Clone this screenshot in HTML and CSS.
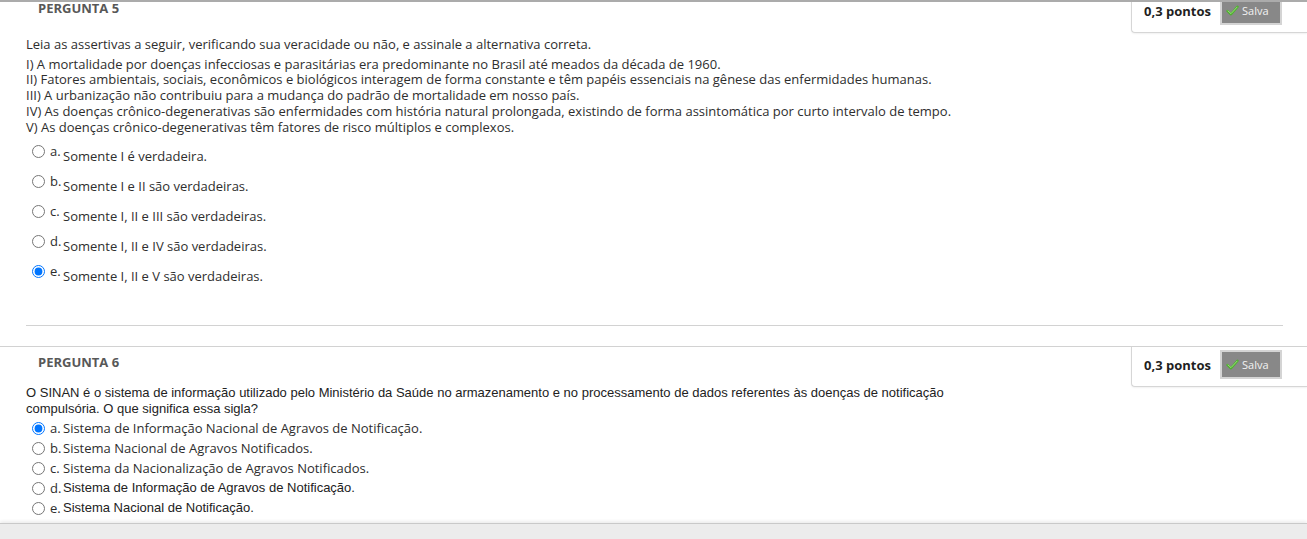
FILE: index.html
```html
<!DOCTYPE html>
<html lang="pt-BR">
<head>
<meta charset="utf-8">
<title>Questionário</title>
<link rel="stylesheet" href="styles.css">
</head>
<body>
<div class="top-line"></div>
<main class="page">
  <section class="question question--first">
    <div class="q-head">
      <div class="score">
        <span class="pts">0,3 pontos</span>
        <span class="saved"><svg class="check" width="13" height="11" viewBox="0 0 13 11"><path d="M1.5 6 L5 9.3 L11.5 1.8" fill="none" stroke="#4fb02f" stroke-width="2.4" stroke-linecap="round" stroke-linejoin="round"/><path d="M2 6 L5 8.6 L11 2.2" fill="none" stroke="#a8e68e" stroke-width="0.8" stroke-linecap="round"/></svg>Salva</span>
      </div>
      <h3 class="q-title">PERGUNTA 5</h3>
    </div>
    <div class="q-body">
      <p class="q-intro">Leia as assertivas a seguir, verificando sua veracidade ou não, e assinale a alternativa correta.</p>
      <div class="assertions">
        <div>I) A mortalidade por doenças infecciosas e parasitárias era predominante no Brasil até meados da década de 1960.</div>
        <div>II) Fatores ambientais, sociais, econômicos e biológicos interagem de forma constante e têm papéis essenciais na gênese das enfermidades humanas.</div>
        <div>III) A urbanização não contribuiu para a mudança do padrão de mortalidade em nosso país.</div>
        <div>IV) As doenças crônico-degenerativas são enfermidades com história natural prolongada, existindo de forma assintomática por curto intervalo de tempo.</div>
        <div>V) As doenças crônico-degenerativas têm fatores de risco múltiplos e complexos.</div>
      </div>
      <div class="options options--tall">
        <label class="opt"><input type="radio" name="q5"><span class="opt-letter">a.</span><span class="opt-text">Somente I é verdadeira.</span></label>
        <label class="opt"><input type="radio" name="q5"><span class="opt-letter">b.</span><span class="opt-text">Somente I e II são verdadeiras.</span></label>
        <label class="opt"><input type="radio" name="q5"><span class="opt-letter">c.</span><span class="opt-text">Somente I, II e III são verdadeiras.</span></label>
        <label class="opt"><input type="radio" name="q5"><span class="opt-letter">d.</span><span class="opt-text">Somente I, II e IV são verdadeiras.</span></label>
        <label class="opt"><input type="radio" name="q5" checked><span class="opt-letter">e.</span><span class="opt-text">Somente I, II e V são verdadeiras.</span></label>
      </div>
      <hr class="q-sep">
    </div>
  </section>

  <section class="question">
    <div class="q-head">
      <div class="score">
        <span class="pts">0,3 pontos</span>
        <span class="saved"><svg class="check" width="13" height="11" viewBox="0 0 13 11"><path d="M1.5 6 L5 9.3 L11.5 1.8" fill="none" stroke="#4fb02f" stroke-width="2.4" stroke-linecap="round" stroke-linejoin="round"/><path d="M2 6 L5 8.6 L11 2.2" fill="none" stroke="#a8e68e" stroke-width="0.8" stroke-linecap="round"/></svg>Salva</span>
      </div>
      <h3 class="q-title">PERGUNTA 6</h3>
    </div>
    <div class="q-body">
      <p class="q-text-arial">O SINAN é o sistema de informação utilizado pelo Ministério da Saúde no armazenamento e no processamento de dados referentes às doenças de notificação compulsória. O que significa essa sigla?</p>
      <div class="options options--compact">
        <label class="opt"><input type="radio" name="q6" checked><span class="opt-letter">a.</span><span class="opt-text">Sistema de Informação Nacional de Agravos de Notificação.</span></label>
        <label class="opt"><input type="radio" name="q6"><span class="opt-letter">b.</span><span class="opt-text">Sistema Nacional de Agravos Notificados.</span></label>
        <label class="opt"><input type="radio" name="q6"><span class="opt-letter">c.</span><span class="opt-text">Sistema da Nacionalização de Agravos Notificados.</span></label>
        <label class="opt"><input type="radio" name="q6"><span class="opt-letter">d.</span><span class="opt-text opt-text--arial">Sistema de Informação de Agravos de Notificação.</span></label>
        <label class="opt"><input type="radio" name="q6"><span class="opt-letter">e.</span><span class="opt-text opt-text--arial">Sistema Nacional de Notificação.</span></label>
      </div>
    </div>
  </section>
  <div class="bottom-bar"></div>
</main>
</body>
</html>
```

FILE: styles.css
```css
html, body {
  margin: 0;
  padding: 0;
  background: #ffffff;
  overflow: hidden;
}

body {
  font-family: "Open Sans", "DejaVu Sans", sans-serif;
  font-size: 13px;
  color: #2e2e2e;
}

.top-line {
  position: fixed;
  top: 0;
  left: 0;
  right: 0;
  height: 2px;
  background: #ababab;
  z-index: 5;
}

.page {
  margin-top: -8px;
}

.question {
  border-top: 1px solid #d2d2d2;
}

.score {
  float: right;
  box-sizing: border-box;
  width: 176px;
  display: flex;
  align-items: center;
  justify-content: space-between;
  padding: 3px 25px 7px 12px;
  border-left: 1px solid #d6d6d6;
  border-bottom: 1px solid #d6d6d6;
  border-bottom-left-radius: 4px;
  box-shadow: 0 1px 2px rgba(0, 0, 0, 0.06);
  background: #ffffff;
}

.pts {
  font-weight: 700;
  font-size: 13px;
  color: #1f1f1f;
  line-height: 18px;
}

.saved {
  box-sizing: border-box;
  display: flex;
  align-items: center;
  width: 62px;
  height: 29px;
  padding-left: 4px;
  border: 2px solid #d4d4d4;
  background: #888888;
  color: #f2f2f2;
  font-size: 11px;
  line-height: 14px;
}

.check {
  margin-right: 3px;
  flex: none;
}

.q-title {
  margin: 0;
  padding: 6px 0 0 38px;
  font-size: 13px;
  line-height: 18px;
  font-weight: 700;
  color: #585858;
}

.q-body {
  padding: 14px 0 0 26px;
}

.q-intro {
  margin: 6px 0 4px;
  line-height: 15.7px;
  width: 960px;
}

.assertions {
  line-height: 15.7px;
  width: 960px;
}

.q-text-arial {
  margin: 0;
  width: 950px;
  font-family: "Liberation Sans", Arial, sans-serif;
  font-size: 13px;
  line-height: 16px;
  color: #222222;
}

.options {
  display: flex;
  flex-direction: column;
  padding-left: 6px;
}

.opt {
  display: flex;
  align-items: flex-start;
  color: #2e2e2e;
}

.opt input {
  width: 13px;
  height: 13px;
  margin: 0;
  flex: none;
}

.opt-letter {
  width: 13px;
  margin-left: 5px;
  flex: none;
}

.options--tall {
  margin-top: 8px;
}

.options--tall .opt {
  height: 30px;
  line-height: 16px;
}

.options--tall .opt input {
  margin-top: 1.5px;
}

.options--tall .opt-text {
  padding-top: 5px;
}

.options--compact {
  margin-top: 1px;
}

.options--compact .opt {
  height: 20px;
  line-height: 20px;
}

.options--compact .opt input {
  margin-top: 3.5px;
}

.opt-text--arial {
  font-family: "Liberation Sans", Arial, sans-serif;
  color: #222222;
}

.q-sep {
  margin: 32px 24px 20px 0;
  border: 0;
  border-top: 1px solid #d2d2d2;
  height: 0;
}

.bottom-bar {
  margin-top: 5px;
  height: 20px;
  background: #ececec;
  border-top: 1px solid #c9c9c9;
  box-shadow: 0 -2px 3px rgba(0, 0, 0, 0.07);
}
```
